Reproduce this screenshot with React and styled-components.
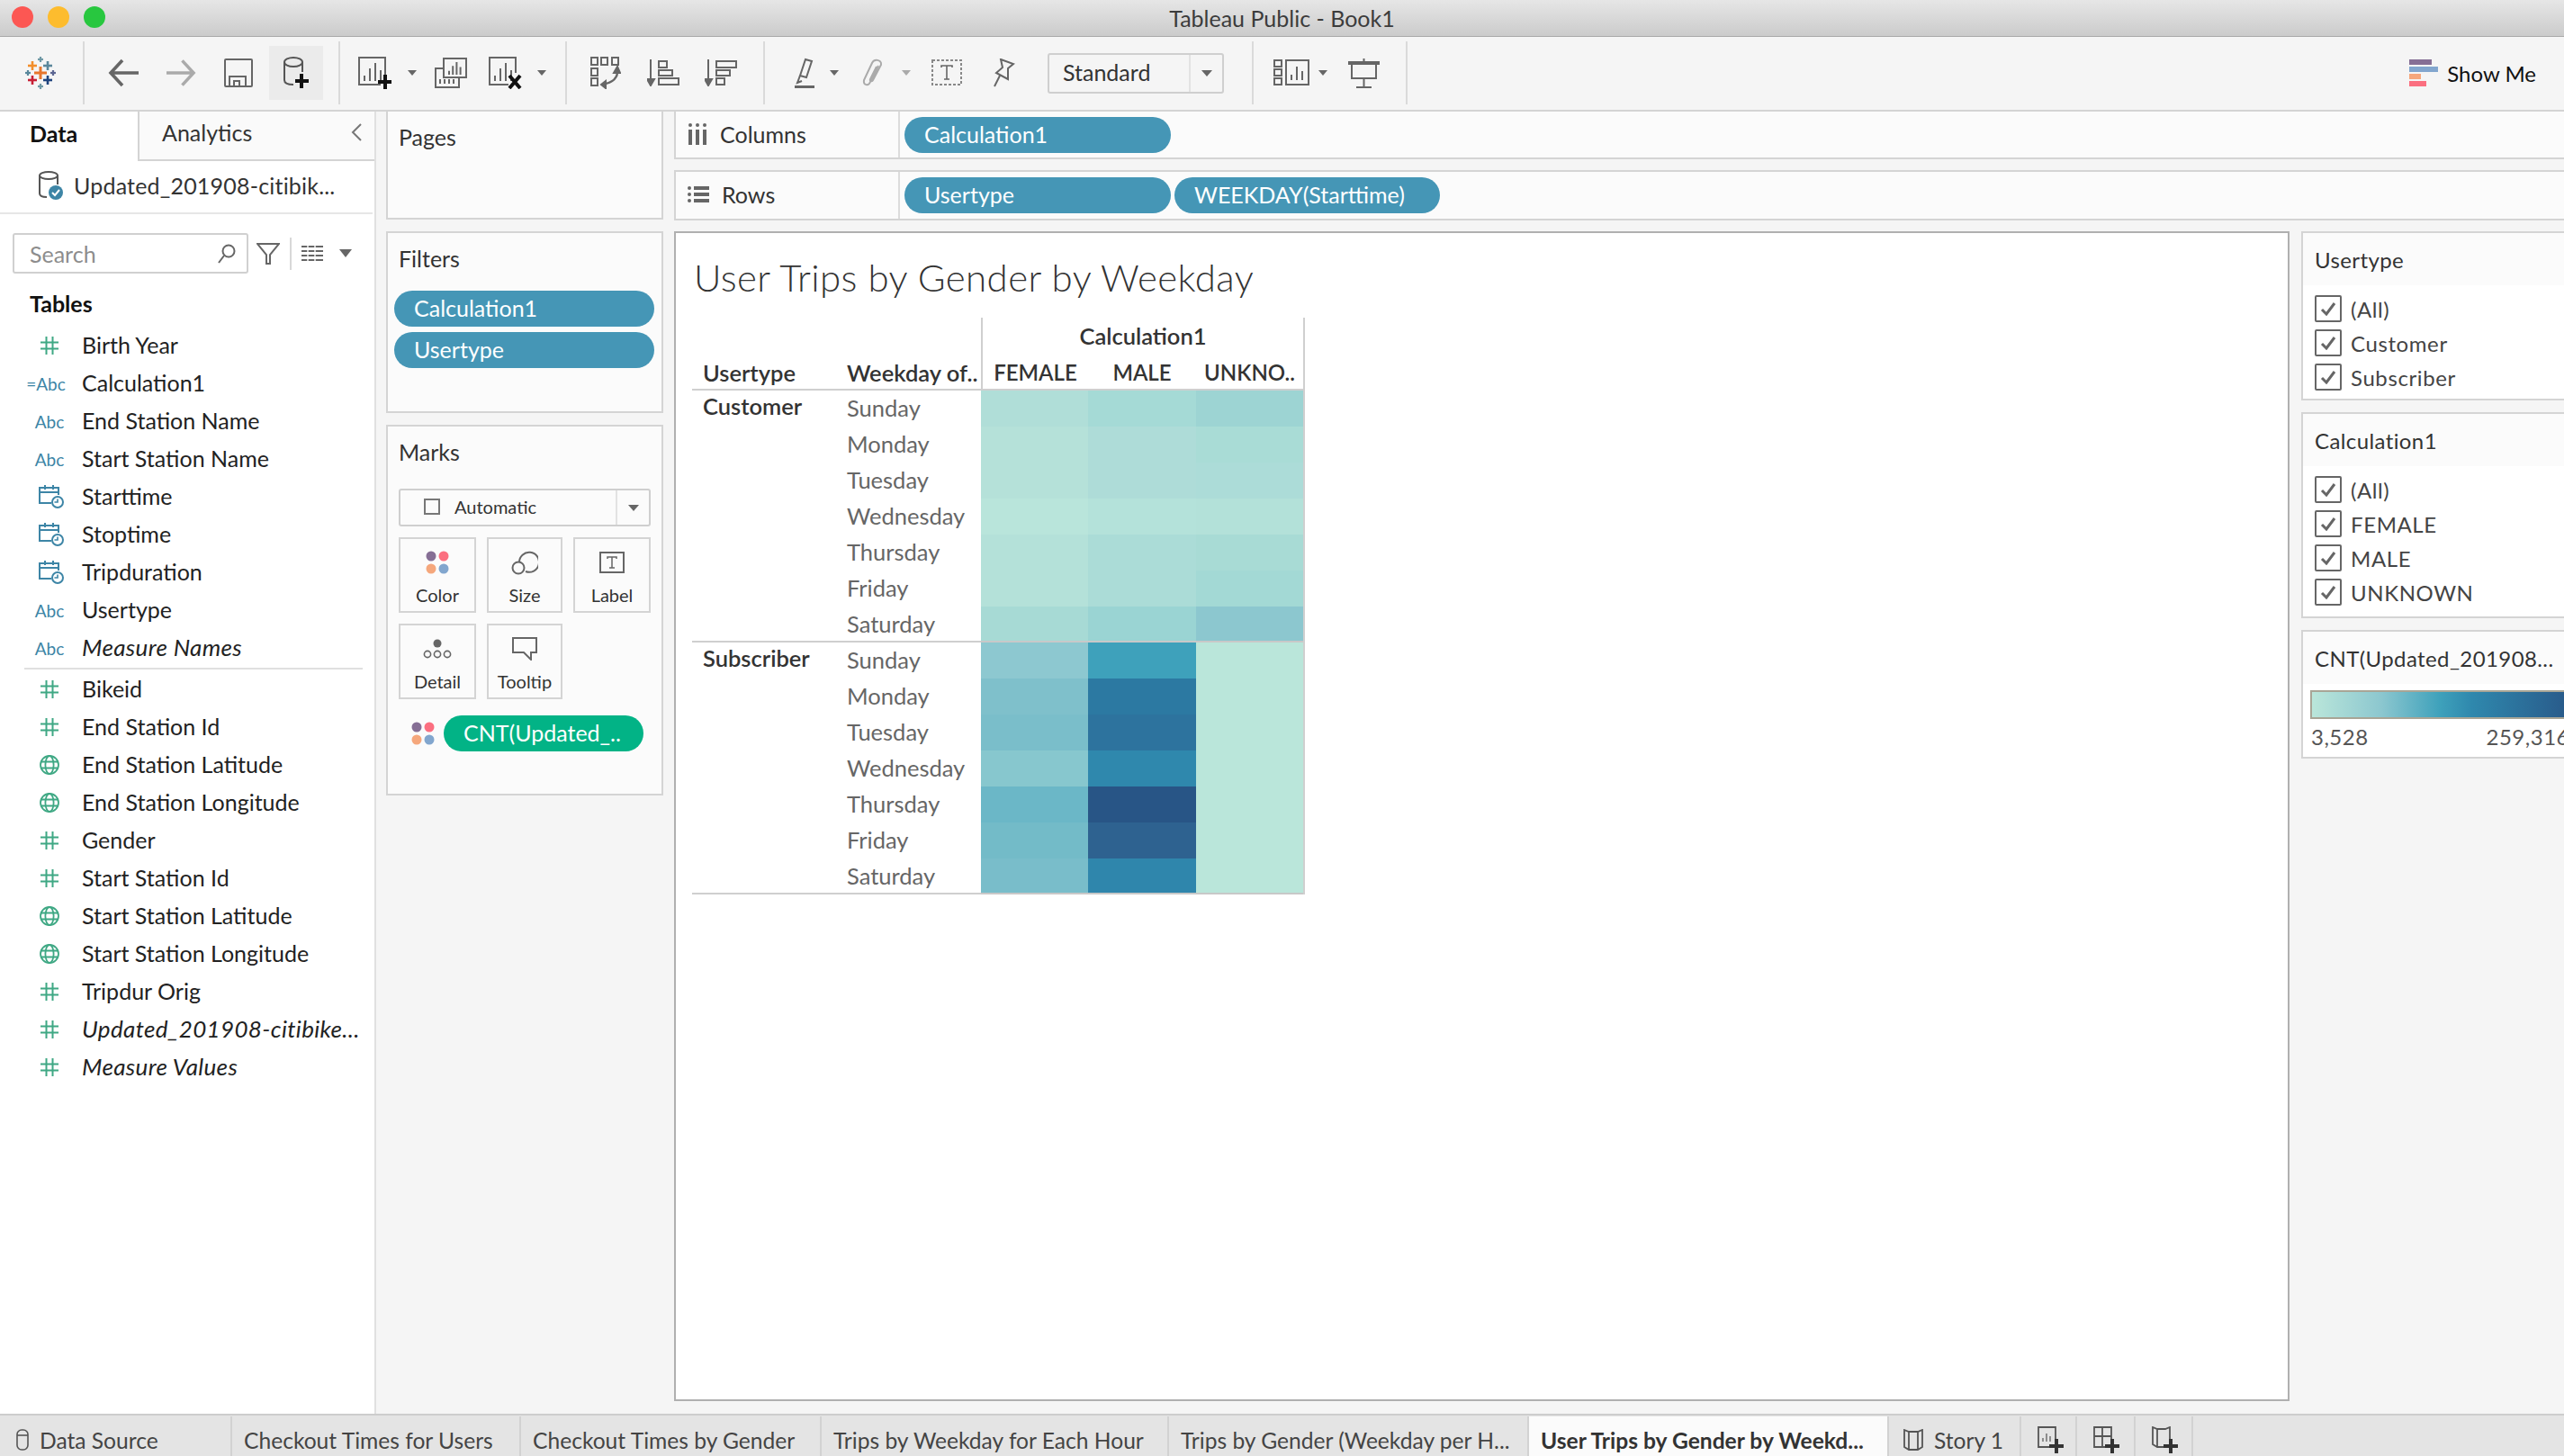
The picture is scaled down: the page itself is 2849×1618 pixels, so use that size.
import React from "react";
import styled, { createGlobalStyle } from "styled-components";

const GlobalStyle = createGlobalStyle`
  html, body {
    margin: 0;
    padding: 0;
    background: #f5f5f5;
  }
  body {
    font-family: "Lato", "Open Sans", sans-serif;
    color: #333;
  }
  * {
    box-sizing: border-box;
  }
`;

// Shell ==================
const Page = styled.div`
  width: 2849px;
  height: 1618px;
  display: flex;
  flex-direction: column;
  overflow: hidden;
`;

const TitleBar = styled.div`
  height: 41px;
  flex: none;
  display: flex;
  align-items: center;
  justify-content: center;
  position: relative;
  background: linear-gradient(#e6e6e6, #cbcbcb);
  border-bottom: 1px solid #a9a9a9;
  font-size: 25px;
  color: #3c3c3c;
`;

const Lights = styled.div`
  position: absolute;
  left: 13px;
  top: 7px;
  display: flex;
  gap: 16px;
`;

const Light = styled.span`
  width: 24px;
  height: 24px;
  border-radius: 50%;
  background: ${({ $c }) => $c};
`;

const Toolbar = styled.div`
  height: 81px;
  flex: none;
  display: flex;
  align-items: center;
  padding-bottom: 1px;
  background: #f5f5f5;
`;

const Tool = styled.span`
  display: flex;
  align-items: center;
  justify-content: center;
  flex: none;
  width: ${({ $w }) => $w}px;
  margin-left: ${({ $ml }) => $ml}px;
  height: ${({ $active }) => ($active ? "60px" : "auto")};
  background: ${({ $active }) => ($active ? "#ebebeb" : "transparent")};
`;

const ToolSep = styled.span`
  flex: none;
  width: 2px;
  height: 70px;
  background: #dadada;
  margin-left: ${({ $ml }) => $ml}px;
`;

const Caret = styled.span`
  flex: none;
  width: 0;
  height: 0;
  border-left: ${({ $w = 11 }) => $w / 2}px solid transparent;
  border-right: ${({ $w = 11 }) => $w / 2}px solid transparent;
  border-top: ${({ $w = 11 }) => $w * 0.6}px solid ${({ $c = "#666" }) => $c};
  margin-left: ${({ $ml = 0 }) => $ml}px;
`;

const DropBox = styled.div`
  flex: none;
  display: flex;
  align-items: center;
  width: ${({ $w }) => $w}px;
  height: ${({ $h }) => $h}px;
  margin-left: ${({ $ml = 0 }) => $ml}px;
  margin-top: ${({ $mt = 0 }) => $mt}px;
  border: 2px solid #cfcfcf;
  border-radius: 3px;
  font-size: ${({ $fs }) => $fs}px;
  color: #333;
`;

const DropLabel = styled.span`
  flex: 1;
  display: flex;
  align-items: center;
  padding: 0 0 2px ${({ $pl }) => $pl}px;
  gap: 16px;
`;

const DropArrow = styled.span`
  flex: none;
  width: ${({ $w }) => $w}px;
  height: 100%;
  border-left: 2px solid #e2e2e2;
  display: flex;
  align-items: center;
  justify-content: center;
`;

const ShowMe = styled.div`
  margin-left: auto;
  padding-right: 31px;
  display: flex;
  align-items: center;
  gap: 10px;
  font-size: 24px;
  color: #111;
`;

const Main = styled.div`
  height: 1449px;
  flex: none;
  display: flex;
  border-top: 2px solid #d4d4d4;
`;

// Data pane ==============
const DataPane = styled.div`
  width: 418px;
  flex: none;
  background: #fff;
  border-right: 2px solid #e0e0e0;
`;

const PaneTabs = styled.div`
  display: flex;
  height: 55px;
`;

const DataTab = styled.div`
  width: 153px;
  padding: 0 0 8px 33px;
  display: flex;
  align-items: center;
  font-size: 25px;
  font-weight: 700;
  color: #111;
`;

const AnalyticsTab = styled.div`
  flex: 1;
  display: flex;
  align-items: center;
  justify-content: space-between;
  padding: 0 14px 8px 25px;
  background: #fafafa;
  border-left: 2px solid #d4d4d4;
  border-bottom: 2px solid #d4d4d4;
  font-size: 25px;
  color: #333;
`;

const SourceRow = styled.div`
  height: 59px;
  display: flex;
  align-items: center;
  gap: 12px;
  padding: 0 0 3px 42px;
  border-bottom: 2px solid #e6e6e6;
  margin-right: 2px;
  font-size: 25px;
  letter-spacing: 0.2px;
  color: #333;
`;

const SearchRow = styled.div`
  display: flex;
  align-items: center;
  margin-top: 21px;
  padding-left: 14px;
`;

const SearchBox = styled.div`
  width: 262px;
  height: 45px;
  display: flex;
  align-items: center;
  justify-content: space-between;
  padding: 0 12px 0 17px;
  border: 2px solid #d0d0d0;
  border-radius: 3px;
  font-size: 25px;
  color: #8d8d8d;
`;

const FunnelSlot = styled.span`
  display: flex;
  margin-left: 9px;
`;

const VRule = styled.span`
  width: 2px;
  height: 36px;
  background: #d8d8d8;
  margin: 0 11px;
`;

const TablesHead = styled.div`
  margin: 18px 0 11px 33px;
  height: 30px;
  line-height: 30px;
  font-size: 25px;
  font-weight: 700;
  color: #111;
`;

const Field = styled.div`
  height: 42px;
  display: flex;
  align-items: center;
  font-size: ${({ $italic }) => ($italic ? 26 : 25)}px;
  letter-spacing: ${({ $italic }) => ($italic ? 0.35 : 0)}px;
  font-style: ${({ $italic }) => ($italic ? "italic" : "normal")};
  color: #222;
`;

const FieldIcon = styled.span`
  flex: none;
  width: 50px;
  margin: 0 11px 0 30px;
  display: flex;
  justify-content: center;
  font-size: 19px;
  font-style: normal;
  letter-spacing: 0;
  color: #3d85a6;
`;

const CalcMark = styled.span`
  margin-right: 8px;
`;

const FieldName = styled.span`
  white-space: nowrap;
  padding-bottom: 3px;
`;

const FieldRule = styled.div`
  height: 2px;
  margin: 1px 13px 1px 27px;
  background: #e0e0e0;
`;

// Cards ==================
const CardColumn = styled.div`
  width: 308px;
  flex: none;
  margin-left: 11px;
  display: flex;
  flex-direction: column;
  gap: 13px;
`;

const Card = styled.div`
  height: ${({ $h }) => $h}px;
  background: #fbfbfb;
  border: 2px solid #d4d4d4;
  border-top-width: ${({ $flush }) => ($flush ? 0 : 2)}px;
  padding: 13px 12px 0 12px;
`;

const CardTitle = styled.div`
  height: 30px;
  line-height: 30px;
  font-size: 25px;
  color: #333;
`;

const FilterPills = styled.div`
  margin: 21px 0 0 -5px;
  display: flex;
  flex-direction: column;
  gap: 6px;
`;

const Pill = styled.div`
  flex: none;
  height: 40px;
  width: ${({ $w }) => $w}px;
  border-radius: 20px;
  background: ${({ $c = "#4596b6" }) => $c};
  color: #fff;
  font-size: 25px;
  line-height: 38px;
  padding-left: ${({ $pl = 22 }) => $pl}px;
  white-space: nowrap;
`;

const MarkGrid = styled.div`
  display: grid;
  grid-template-columns: 86px 84px 86px;
  grid-auto-rows: 84px;
  column-gap: 12px;
  row-gap: 12px;
  margin-top: 12px;
`;

const MarkButton = styled.div`
  border: 2px solid #d4d4d4;
  display: flex;
  flex-direction: column;
  align-items: center;
  justify-content: space-between;
  padding: 7px 0 6px;
  font-size: 20px;
  color: #333;
`;

const MarkIcon = styled.span`
  height: 38px;
  display: flex;
  align-items: center;
  justify-content: center;
`;

const EncodingRow = styled.div`
  display: flex;
  align-items: center;
  gap: 10px;
  margin: 18px 0 0 14px;
`;

const MarkSquare = styled.span`
  width: 18px;
  height: 18px;
  border: 2px solid #777;
`;

// Shelves + view =========
const Workspace = styled.div`
  width: 2100px;
  flex: none;
  margin-left: 12px;
  display: flex;
  flex-direction: column;
`;

const Shelf = styled.div`
  height: ${({ $h }) => $h}px;
  margin-bottom: 12px;
  display: flex;
  background: #fbfbfb;
  border: 2px solid #d4d4d4;
  border-top-width: ${({ $flush }) => ($flush ? 0 : 2)}px;
  border-right: 0;
`;

const ShelfLabel = styled.div`
  width: 249px;
  flex: none;
  display: flex;
  align-items: center;
  gap: 14px;
  padding: 0 0 2px 13px;
  border-right: 2px solid #dcdcdc;
  font-size: 25px;
  color: #333;
`;

const ShelfPills = styled.div`
  display: flex;
  align-items: center;
  gap: 4px;
  padding-left: 5px;
`;

const Content = styled.div`
  flex: 1;
  display: flex;
  gap: 13px;
  padding-bottom: 14px;
`;

const View = styled.div`
  width: 1795px;
  flex: none;
  background: #fff;
  border: 2px solid #b0b0b0;
  padding: 26px 0 0 18px;
`;

const ViewTitle = styled.div`
  margin-left: 2px;
  height: 50px;
  line-height: 46px;
  font-size: 42px;
  letter-spacing: 0.4px;
  font-weight: 300;
  color: #333;
`;

const Crosstab = styled.div`
  margin-top: 18px;
  display: grid;
  width: 681px;
  grid-template-columns: 172px 149px 119px 120px 119px;
  grid-template-rows: 40px 41px;
  grid-auto-rows: 40px;
  border-right: 2px solid #cfcfcf;
`;

const TopHead = styled.div`
  grid-column: 3 / 6;
  display: flex;
  align-items: center;
  justify-content: center;
  font-size: 25.5px;
  font-weight: 600;
  color: #333;
  border-left: 2px solid #cfcfcf;
`;

const HeadCell = styled.div`
  display: flex;
  align-items: center;
  justify-content: ${({ $center }) => ($center ? "center" : "flex-start")};
  padding-left: ${({ $pl = 0 }) => $pl}px;
  font-size: ${({ $center }) => ($center ? 24 : 25.5)}px;
  font-weight: 600;
  color: #333;
  white-space: nowrap;
  box-shadow: inset 0 -2px 0 #cfcfcf;
  border-left: ${({ $rule }) => ($rule ? "2px solid #cfcfcf" : "0")};
`;

const TypeCell = styled.div`
  grid-row: span 7;
  padding: 0 0 0 12px;
  line-height: 34px;
  font-size: 25.5px;
  font-weight: 600;
  color: #333;
  box-shadow: inset 0 -2px 0 #cfcfcf;
`;

const DayCell = styled.div`
  display: flex;
  align-items: center;
  padding-bottom: 2px;
  font-size: 25.5px;
  color: #666;
  box-shadow: ${({ $end }) => ($end ? "inset 0 -2px 0 #cfcfcf" : "none")};
`;

const HeatCell = styled.div`
  background: ${({ $c }) => $c};
  box-shadow: ${({ $end }) => ($end ? "inset 0 -2px 0 #c8c8c8" : "none")};
`;

// Right filters ==========
const SideColumn = styled.div`
  width: 310px;
  flex: none;
  display: flex;
  flex-direction: column;
  gap: 13px;
`;

const SideCard = styled.div`
  border: 2px solid #d4d4d4;
  border-right: 0;
  background: #fff;
  padding-bottom: ${({ $pb = 8 }) => $pb}px;
`;

const SideHead = styled.div`
  height: 58px;
  display: flex;
  align-items: center;
  padding-left: 13px;
  background: #fbfbfb;
  font-size: 24px;
  letter-spacing: 0.4px;
  color: #333;
  white-space: nowrap;
`;

const CheckList = styled.div`
  padding-top: 7px;
`;

const CheckRow = styled.div`
  height: 38px;
  display: flex;
  align-items: center;
  gap: 10px;
  padding-left: 13px;
  font-size: 24px;
  letter-spacing: 0.6px;
  color: #444;
`;

const CheckBox = styled.span`
  flex: none;
  width: 30px;
  height: 30px;
  display: flex;
  align-items: center;
  justify-content: center;
  border: 2px solid #666;
  border-radius: 2px;
`;

const LegendBar = styled.div`
  height: 32px;
  margin: 7px 0 0 8px;
  border: 2px solid #a8a596;
  background: linear-gradient(90deg, #bae6da 0%, #8cc7cf 26%, #3ea1bb 48%, #2f88ad 60%, #285586 100%);
`;

const LegendLabels = styled.div`
  display: flex;
  justify-content: space-between;
  padding: 5px 0 0 9px;
  width: 296px;
  font-size: 24px;
  letter-spacing: 0.5px;
  color: #555;
`;

// Tabs ===================
const TabBar = styled.div`
  flex: 1;
  display: flex;
  background: #e4e4e4;
  border-top: 2px solid #cdcdcd;
`;

const Tab = styled.div`
  flex: none;
  width: ${({ $w }) => $w}px;
  margin-top: 1px;
  display: flex;
  align-items: center;
  gap: 12px;
  padding: 8px 0 0 ${({ $pl = 13 }) => $pl}px;
  background: ${({ $active }) => ($active ? "#fbfbfb" : "transparent")};
  border-right: 2px solid #d2d2d2;
  font-size: 24.6px;
  font-weight: ${({ $active }) => ($active ? 700 : 400)};
  color: ${({ $active }) => ($active ? "#333" : "#444")};
  white-space: nowrap;
`;

// Icons ==================
const Cross = ({ x, y, r, w = 2.6, c }) => (
  <g fill={c}>
    <rect x={x - r} y={y - w / 2} width={r * 2} height={w} />
    <rect x={x - w / 2} y={y - r} width={w} height={r * 2} />
  </g>
);

const TableauLogo = () => (
  <svg width="34" height="38" viewBox="0 0 34 38">
    <Cross x={17} y={19} r={7} w={3} c="#e8762c" />
    <Cross x={8} y={11} r={5} c="#f28e2b" />
    <Cross x={25} y={11} r={5} c="#5b879b" />
    <Cross x={8} y={27} r={5} c="#c72035" />
    <Cross x={25} y={27} r={5} c="#1f447e" />
    <Cross x={17} y={4} r={3} w={2.2} c="#7099a6" />
    <Cross x={3} y={19} r={3} w={2.2} c="#59879b" />
    <Cross x={31} y={19} r={3} w={2.2} c="#5c6692" />
    <Cross x={17} y={34} r={3} w={2.2} c="#7099a6" />
  </svg>
);

const ArrowIcon = ({ flip, c }) => (
  <svg width="34" height="32" viewBox="0 0 34 32" style={flip ? { transform: "scaleX(-1)" } : undefined}>
    <path d="M16 2 L3 16 L16 30 M3 16 H34" fill="none" stroke={c} strokeWidth="3.6" />
  </svg>
);

const SaveIcon = () => (
  <svg width="32" height="32" viewBox="0 0 32 32" fill="none" stroke="#666" strokeWidth="2">
    <rect x="1" y="1" width="30" height="30" rx="1" />
    <path d="M6 31 V20 H24 V31 M11 31 V25 H17 V31" />
  </svg>
);

const AddSourceIcon = () => (
  <svg width="30" height="36" viewBox="0 0 30 36" fill="none">
    <ellipse cx="12" cy="6" rx="10" ry="5" stroke="#555" strokeWidth="2" />
    <path d="M2 6 V26 C2 30 6 31 12 31 M22 6 V17" stroke="#555" strokeWidth="2" />
    <path d="M21 19 V35 M14 27 H29" stroke="#111" strokeWidth="4" />
  </svg>
);

const SheetBars = ({ x = 7, y = 11, s = 1, c = "#666" }) => (
  <path
    d={`M${x} ${y + 14 * s} v${6 * s} M${x + 6 * s} ${y + 6 * s} v${14 * s} M${x + 12 * s} ${y} v${20 * s} M${x + 18 * s} ${y + 8 * s} v${12 * s}`}
    stroke={c}
    strokeWidth="2"
    fill="none"
  />
);

const NewSheetIcon = () => (
  <svg width="37" height="36" viewBox="0 0 37 36" fill="none">
    <path d="M25 31 H1 V1 H30 V20" stroke="#666" strokeWidth="2" />
    <SheetBars x={7} y={7} />
    <path d="M30 20 V36 M22 28 H37" stroke="#111" strokeWidth="4" />
  </svg>
);

const DupSheetIcon = () => (
  <svg width="36" height="34" viewBox="0 0 36 34" fill="none" stroke="#666" strokeWidth="2">
    <rect x="10" y="1" width="25" height="21" fill="#f5f5f5" />
    <path d="M10 12 H1 V33 H27 V22" />
    <SheetBars x={16} y={5} s={0.7} />
    <path d="M6 24 v5 M11 24 v5 M16 24 v5 M21 24 v5" />
  </svg>
);

const ClearSheetIcon = () => (
  <svg width="37" height="36" viewBox="0 0 37 36" fill="none">
    <path d="M22 31 H1 V1 H30 V18" stroke="#666" strokeWidth="2" />
    <SheetBars x={7} y={7} />
    <path d="M23 21 L35 35 M35 21 L23 35" stroke="#111" strokeWidth="4" />
  </svg>
);

const SwapIcon = () => (
  <svg width="34" height="36" viewBox="0 0 34 36" fill="none" stroke="#666" strokeWidth="2">
    <rect x="1" y="1" width="7" height="8" />
    <rect x="12" y="1" width="7" height="8" />
    <rect x="24" y="1" width="7" height="8" />
    <rect x="1" y="13" width="7" height="8" />
    <rect x="1" y="24" width="7" height="8" />
    <path d="M30 14 C31 23 25 29 13 31" strokeWidth="2.4" />
    <path d="M26 18 L30 11 L33 18 Z M17 27 L12 31 L17 35 Z" fill="#666" />
  </svg>
);

const SortIcon = ({ desc }) => (
  <svg width="36" height="30" viewBox="0 0 36 30" fill="none" stroke="#666" strokeWidth="2">
    <path d="M4 0 V24" />
    <path d="M0 22 H8 L4 29 Z" fill="#666" />
    {desc ? (
      <>
        <rect x="13" y="2" width="22" height="7" />
        <rect x="13" y="12" width="15" height="6" />
        <rect x="13" y="21" width="9" height="7" />
      </>
    ) : (
      <>
        <rect x="13" y="2" width="9" height="7" />
        <rect x="13" y="12" width="15" height="6" />
        <rect x="13" y="21" width="22" height="7" />
      </>
    )}
  </svg>
);

const HighlightIcon = () => (
  <svg width="22" height="34" viewBox="0 0 22 34" fill="none" stroke="#666" strokeWidth="2">
    <path d="M12 2 L19 4 L13 22 L6 20 Z" />
    <path d="M6 20 L3 28 L8 26" />
    <rect x="0" y="31" width="22" height="3" fill="#666" stroke="none" />
  </svg>
);

const ClipIcon = () => (
  <svg width="25" height="32" viewBox="0 0 25 32" fill="none" stroke="#aaa" strokeWidth="2">
    <path d="M19 8 L10 26 C8 31 2 30 3 24 L12 5 C14 0 23 1 22 7 L13 24 C12 26 9 25 10 23 L17 9" />
  </svg>
);

const DashedTIcon = () => (
  <svg width="34" height="30" viewBox="0 0 34 30" fill="none">
    <rect x="1" y="1" width="32" height="27" stroke="#888" strokeWidth="2" strokeDasharray="3 2" />
    <path d="M11 9 V7 H23 V9 M17 7 V22 M14 22 H20" stroke="#666" strokeWidth="1.6" />
  </svg>
);

const PinIcon = () => (
  <svg width="25" height="32" viewBox="0 0 25 32" fill="none" stroke="#666" strokeWidth="2">
    <path d="M9 1 L23 6 L17 11 L17 23 L4 16 L11 10 Z" />
    <path d="M8 19 L2 31" />
  </svg>
);

const FitIcon = () => (
  <svg width="40" height="30" viewBox="0 0 40 30" fill="none" stroke="#666" strokeWidth="2">
    <rect x="1" y="1" width="8" height="7" />
    <rect x="1" y="11" width="8" height="7" />
    <rect x="1" y="21" width="8" height="7" />
    <rect x="14" y="1" width="25" height="27" />
    <path d="M20 17 V23 M26 8 V23 M32 13 V23" />
  </svg>
);

const PresentIcon = () => (
  <svg width="35" height="33" viewBox="0 0 35 33" fill="none" stroke="#666" strokeWidth="2">
    <path d="M0 5 H35" strokeWidth="4" />
    <path d="M4 6 V22 H31 V6 M17.5 0 V4 M17.5 22 V31 M9 32 H26" />
  </svg>
);

const ShowMeIcon = () => (
  <svg width="32" height="31" viewBox="0 0 32 31">
    <rect width="25" height="6" fill="#866f95" />
    <rect y="8" width="32" height="6" fill="#82a6ce" />
    <rect y="16" width="13" height="6" fill="#f5a77c" />
    <rect y="24" width="19" height="6" fill="#fb6f80" />
  </svg>
);

const ChevronLeft = () => (
  <svg width="12" height="20" viewBox="0 0 12 20" fill="none" stroke="#777" strokeWidth="2">
    <path d="M11 1 L2 10 L11 19" />
  </svg>
);

const SourceIcon = () => (
  <svg width="28" height="32" viewBox="0 0 28 32" fill="none">
    <ellipse cx="12" cy="5" rx="10" ry="4" stroke="#555" strokeWidth="2" />
    <path d="M2 5 V25 C2 28 5 29 10 29 M22 5 V15" stroke="#555" strokeWidth="2" />
    <circle cx="20" cy="24" r="8" fill="#3d85a6" />
    <path d="M16 24 L19 27 L24 21" stroke="#fff" strokeWidth="2" />
  </svg>
);

const Magnifier = () => (
  <svg width="20" height="22" viewBox="0 0 20 22" fill="none" stroke="#666" strokeWidth="2">
    <circle cx="12" cy="8" r="6.5" />
    <path d="M7 13 L1 21" />
  </svg>
);

const FunnelIcon = () => (
  <svg width="26" height="24" viewBox="0 0 26 24" fill="none" stroke="#666" strokeWidth="2">
    <path d="M1 1 H25 L15 13 V23 H11 V13 Z" />
  </svg>
);

const ListGridIcon = () => (
  <svg width="24" height="20" viewBox="0 0 24 20" stroke="#666" strokeWidth="2" fill="none">
    <path d="M0 2 H24 M0 7 H24 M0 12 H24 M0 17 H24" />
    <path d="M7 0 V20 M15 0 V20" stroke="#fff" strokeWidth="1.4" />
  </svg>
);

const HashIcon = () => (
  <svg width="20" height="20" viewBox="0 0 20 20" stroke="#3fa884" strokeWidth="2" fill="none">
    <path d="M6.5 0 V20 M13.5 0 V20 M0 6.5 H20 M0 13.5 H20" />
  </svg>
);

const GlobeIcon = () => (
  <svg width="22" height="22" viewBox="0 0 22 22" stroke="#3fa884" strokeWidth="1.8" fill="none">
    <circle cx="11" cy="11" r="10" />
    <ellipse cx="11" cy="11" rx="4.6" ry="10" />
    <path d="M1 7.5 H21 M1 14.5 H21" />
  </svg>
);

const CalendarIcon = () => (
  <svg width="28" height="26" viewBox="0 0 28 26" stroke="#3d85a6" strokeWidth="2" fill="none" style={{ marginLeft: 4 }}>
    <path d="M14 20 H1 V3 H22 V11 M1 8 H22 M7 0 V5 M16 0 V5" />
    <circle cx="21" cy="19" r="6" fill="#fff" />
    <path d="M21 15.5 V19 H17.5" strokeWidth="1.6" />
  </svg>
);

const ColorDots = () => (
  <svg width="26" height="26" viewBox="0 0 26 26">
    <circle cx="6" cy="6" r="5.5" fill="#866f95" />
    <circle cx="20" cy="6" r="5.5" fill="#fb6f80" />
    <circle cx="6" cy="20" r="5.5" fill="#f5a77c" />
    <circle cx="20" cy="20" r="5.5" fill="#82a6ce" />
  </svg>
);

const SizeIcon = () => (
  <svg width="30" height="28" viewBox="0 0 30 28" fill="none" stroke="#666" strokeWidth="2">
    <path d="M9 14 A11 11 0 1 1 16 24" />
    <circle cx="8" cy="20" r="6.5" />
  </svg>
);

const LabelIcon = () => (
  <svg width="28" height="24" viewBox="0 0 28 24" fill="none" stroke="#666" strokeWidth="2">
    <rect x="1" y="1" width="26" height="22" />
    <path d="M9 8 V6 H19 V8 M14 6 V18 M11 18 H17" strokeWidth="1.5" />
  </svg>
);

const DetailIcon = () => (
  <svg width="32" height="22" viewBox="0 0 32 22" fill="none" stroke="#666" strokeWidth="1.6">
    <circle cx="16" cy="5" r="4.5" fill="#666" stroke="none" />
    <circle cx="5" cy="17" r="3.6" />
    <circle cx="16" cy="17" r="3.6" />
    <circle cx="27" cy="17" r="3.6" />
  </svg>
);

const TooltipIcon = () => (
  <svg width="28" height="26" viewBox="0 0 28 26" fill="none" stroke="#666" strokeWidth="2">
    <path d="M2 1 H27 V17 H21 V25 L13 17 H1 V1 Z" />
  </svg>
);

const ColumnsIcon = () => (
  <svg width="22" height="24" viewBox="0 0 22 24" fill="#666">
    <circle cx="3" cy="2" r="2" />
    <circle cx="11" cy="2" r="2" />
    <circle cx="19" cy="2" r="2" />
    <rect x="1" y="7" width="4" height="17" />
    <rect x="9" y="7" width="4" height="17" />
    <rect x="17" y="7" width="4" height="17" />
  </svg>
);

const RowsIcon = () => (
  <svg width="24" height="20" viewBox="0 0 24 20" fill="#666">
    <circle cx="2" cy="3" r="2" />
    <circle cx="2" cy="10" r="2" />
    <circle cx="2" cy="17" r="2" />
    <rect x="7" y="1" width="17" height="4" />
    <rect x="7" y="8" width="17" height="4" />
    <rect x="7" y="15" width="17" height="4" />
  </svg>
);

const CheckMark = () => (
  <svg width="18" height="16" viewBox="0 0 18 16" fill="none" stroke="#666" strokeWidth="3">
    <path d="M2 9 L7 14 L16 2" />
  </svg>
);

const TabSourceIcon = () => (
  <svg width="14" height="24" viewBox="0 0 14 24" fill="none" stroke="#555" strokeWidth="1.6">
    <rect x="1" y="1" width="12" height="22" rx="5" />
    <path d="M1 7 H13" />
  </svg>
);

const StoryIcon = () => (
  <svg width="22" height="24" viewBox="0 0 22 24" fill="none" stroke="#555" strokeWidth="1.8">
    <path d="M1 1 L6 3 H16 L21 1 V20 L16 23 H6 L1 20 Z M6 3 V23 M16 3 V23" />
  </svg>
);

const NewTabIcon = ({ kind }) => (
  <svg width="30" height="30" viewBox="0 0 30 30" fill="none" stroke="#555" strokeWidth="1.8">
    {kind === "sheet" && (
      <>
        <path d="M16 23 H1 V1 H20 V14" />
        <path d="M6 17 v-4 M10 17 v-9 M14 17 v-6" strokeWidth="1.2" />
      </>
    )}
    {kind === "dash" && <path d="M16 23 H1 V1 H20 V14 M1 11 H20 M10 1 V23" />}
    {kind === "story" && <path d="M16 23 H6 L1 20 V1 L6 3 H15 L20 1 V14 M6 3 V23" />}
    <path d="M21 14 V30 M13 22 H29" stroke="#333" strokeWidth="4" />
  </svg>
);

// Data ===================
const dimensions = [
  { icon: "hash", name: "Birth Year" },
  { icon: "calc", name: "Calculation1" },
  { icon: "abc", name: "End Station Name" },
  { icon: "abc", name: "Start Station Name" },
  { icon: "date", name: "Starttime" },
  { icon: "date", name: "Stoptime" },
  { icon: "date", name: "Tripduration" },
  { icon: "abc", name: "Usertype" },
  { icon: "abc", name: "Measure Names", italic: true },
];

const others = [
  { icon: "hash", name: "Bikeid" },
  { icon: "hash", name: "End Station Id" },
  { icon: "globe", name: "End Station Latitude" },
  { icon: "globe", name: "End Station Longitude" },
  { icon: "hash", name: "Gender" },
  { icon: "hash", name: "Start Station Id" },
  { icon: "globe", name: "Start Station Latitude" },
  { icon: "globe", name: "Start Station Longitude" },
  { icon: "hash", name: "Tripdur Orig" },
  { icon: "hash", name: "Updated_201908-citibike...", italic: true },
  { icon: "hash", name: "Measure Values", italic: true },
];

const days = ["Sunday", "Monday", "Tuesday", "Wednesday", "Thursday", "Friday", "Saturday"];

const heat = {
  Customer: [
    ["#b0ded8", "#a5dad6", "#9dd4d3"],
    ["#b5e1d9", "#aedcd8", "#a9dcd6"],
    ["#b5e1d9", "#aedcd8", "#acdcd8"],
    ["#b9e5db", "#b4e2da", "#b3e1d9"],
    ["#b4e1d9", "#abdcd7", "#a8dbd5"],
    ["#b4e1d9", "#abdcd7", "#a3d9d5"],
    ["#a7dad5", "#9ad4d3", "#8cc7cf"],
  ],
  Subscriber: [
    ["#8dc8d0", "#3ea1bb", "#bae6da"],
    ["#7fc0cb", "#2c79a2", "#bae6da"],
    ["#7abeca", "#2d739e", "#bae6da"],
    ["#87c7ce", "#2f88ad", "#bae6da"],
    ["#6bb7c7", "#285586", "#bae6da"],
    ["#73bbc8", "#2e6290", "#bae6da"],
    ["#79bdca", "#2f86ac", "#bae6da"],
  ],
};

const fieldIcon = (icon) => {
  if (icon === "hash") return <HashIcon />;
  if (icon === "globe") return <GlobeIcon />;
  if (icon === "date") return <CalendarIcon />;
  if (icon === "calc") return <CalcMark>=Abc</CalcMark>;
  return "Abc";
};

const FieldRow = ({ icon, name, italic }) => (
  <Field $italic={italic}>
    <FieldIcon>{fieldIcon(icon)}</FieldIcon>
    <FieldName>{name}</FieldName>
  </Field>
);

const FilterCard = ({ title, items, pb }) => (
  <SideCard $pb={pb}>
    <SideHead>{title}</SideHead>
    <CheckList>
      {items.map((item) => (
        <CheckRow key={item}>
          <CheckBox>
            <CheckMark />
          </CheckBox>
          {item}
        </CheckRow>
      ))}
    </CheckList>
  </SideCard>
);

export default function App() {
  return (
    <Page>
      <GlobalStyle />
      <TitleBar>
        <Lights>
          <Light $c="#fc5753" />
          <Light $c="#fdbc2e" />
          <Light $c="#28c73f" />
        </Lights>
        Tableau Public - Book1
      </TitleBar>

      <Toolbar>
        <Tool $ml={28} $w={34}><TableauLogo /></Tool>
        <ToolSep $ml={30} />
        <Tool $ml={26} $w={34}><ArrowIcon c="#666" /></Tool>
        <Tool $ml={31} $w={33}><ArrowIcon flip c="#aaa" /></Tool>
        <Tool $ml={31} $w={32}><SaveIcon /></Tool>
        <Tool $ml={18} $w={60} $active><AddSourceIcon /></Tool>
        <ToolSep $ml={17} />
        <Tool $ml={20} $w={37}><NewSheetIcon /></Tool>
        <Caret $ml={18} $w={10} />
        <Tool $ml={20} $w={36}><DupSheetIcon /></Tool>
        <Tool $ml={24} $w={37}><ClearSheetIcon /></Tool>
        <Caret $ml={17} $w={10} />
        <ToolSep $ml={21} />
        <Tool $ml={26} $w={34}><SwapIcon /></Tool>
        <Tool $ml={29} $w={36}><SortIcon /></Tool>
        <Tool $ml={28} $w={36}><SortIcon desc /></Tool>
        <ToolSep $ml={29} />
        <Tool $ml={33} $w={22}><HighlightIcon /></Tool>
        <Caret $ml={17} $w={11} />
        <Tool $ml={25} $w={25}><ClipIcon /></Tool>
        <Caret $ml={20} $w={10} $c="#aaa" />
        <Tool $ml={23} $w={34}><DashedTIcon /></Tool>
        <Tool $ml={34} $w={25}><PinIcon /></Tool>
        <DropBox $ml={36} $w={196} $h={45} $fs={25}>
          <DropLabel $pl={15}>Standard</DropLabel>
          <DropArrow $w={37}><Caret $w={12} /></DropArrow>
        </DropBox>
        <ToolSep $ml={31} />
        <Tool $ml={22} $w={40}><FitIcon /></Tool>
        <Caret $ml={10} $w={11} />
        <Tool $ml={23} $w={35}><PresentIcon /></Tool>
        <ToolSep $ml={29} />
        <ShowMe>
          <ShowMeIcon />
          Show Me
        </ShowMe>
      </Toolbar>

      <Main>
        <DataPane>
          <PaneTabs>
            <DataTab>Data</DataTab>
            <AnalyticsTab>
              Analytics
              <ChevronLeft />
            </AnalyticsTab>
          </PaneTabs>
          <SourceRow>
            <SourceIcon />
            Updated_201908-citibik...
          </SourceRow>
          <SearchRow>
            <SearchBox>
              Search
              <Magnifier />
            </SearchBox>
            <FunnelSlot><FunnelIcon /></FunnelSlot>
            <VRule />
            <ListGridIcon />
            <Caret $ml={18} $w={15} />
          </SearchRow>
          <TablesHead>Tables</TablesHead>
          {dimensions.map((f) => (
            <FieldRow key={f.name} {...f} />
          ))}
          <FieldRule />
          {others.map((f) => (
            <FieldRow key={f.name} {...f} />
          ))}
        </DataPane>

        <CardColumn>
          <Card $h={120} $flush>
            <CardTitle>Pages</CardTitle>
          </Card>
          <Card $h={202}>
            <CardTitle>Filters</CardTitle>
            <FilterPills>
              <Pill $w={289}>Calculation1</Pill>
              <Pill $w={289}>Usertype</Pill>
            </FilterPills>
          </Card>
          <Card $h={412}>
            <CardTitle>Marks</CardTitle>
            <DropBox $w={280} $h={42} $fs={20} $mt={26}>
              <DropLabel $pl={26}>
                <MarkSquare />
                Automatic
              </DropLabel>
              <DropArrow $w={37}><Caret $w={13} /></DropArrow>
            </DropBox>
            <MarkGrid>
              <MarkButton><MarkIcon><ColorDots /></MarkIcon>Color</MarkButton>
              <MarkButton><MarkIcon><SizeIcon /></MarkIcon>Size</MarkButton>
              <MarkButton><MarkIcon><LabelIcon /></MarkIcon>Label</MarkButton>
              <MarkButton><MarkIcon><DetailIcon /></MarkIcon>Detail</MarkButton>
              <MarkButton><MarkIcon><TooltipIcon /></MarkIcon>Tooltip</MarkButton>
            </MarkGrid>
            <EncodingRow>
              <ColorDots />
              <Pill $w={222} $c="#02b386">CNT(Updated_..</Pill>
            </EncodingRow>
          </Card>
        </CardColumn>

        <Workspace>
          <Shelf $h={53} $flush>
            <ShelfLabel><ColumnsIcon />Columns</ShelfLabel>
            <ShelfPills>
              <Pill $w={296}>Calculation1</Pill>
            </ShelfPills>
          </Shelf>
          <Shelf $h={56}>
            <ShelfLabel><RowsIcon />Rows</ShelfLabel>
            <ShelfPills>
              <Pill $w={296}>Usertype</Pill>
              <Pill $w={295}>WEEKDAY(Starttime)</Pill>
            </ShelfPills>
          </Shelf>
          <Content>
            <View>
              <ViewTitle>User Trips by Gender by Weekday</ViewTitle>
              <Crosstab>
                <span />
                <span />
                <TopHead>Calculation1</TopHead>
                <HeadCell $pl={12}>Usertype</HeadCell>
                <HeadCell>Weekday of..</HeadCell>
                <HeadCell $center $rule>FEMALE</HeadCell>
                <HeadCell $center>MALE</HeadCell>
                <HeadCell $center>UNKNO..</HeadCell>
                {Object.entries(heat).map(([type, rows]) =>
                  rows.map((row, i) => (
                    <React.Fragment key={type + days[i]}>
                      {i === 0 && <TypeCell>{type}</TypeCell>}
                      <DayCell $end={i === 6}>{days[i]}</DayCell>
                      {row.map((c, j) => (
                        <HeatCell key={j} $c={c} $end={i === 6} />
                      ))}
                    </React.Fragment>
                  ))
                )}
              </Crosstab>
            </View>
            <SideColumn>
              <FilterCard title="Usertype" pb={5} items={["(All)", "Customer", "Subscriber"]} />
              <FilterCard title="Calculation1" items={["(All)", "FEMALE", "MALE", "UNKNOWN"]} />
              <SideCard>
                <SideHead>CNT(Updated_201908...</SideHead>
                <LegendBar />
                <LegendLabels>
                  <span>3,528</span>
                  <span>259,316</span>
                </LegendLabels>
              </SideCard>
            </SideColumn>
          </Content>
        </Workspace>
      </Main>

      <TabBar>
        <Tab $w={258} $pl={18}><TabSourceIcon />Data Source</Tab>
        <Tab $w={321}>Checkout Times for Users</Tab>
        <Tab $w={334}>Checkout Times by Gender</Tab>
        <Tab $w={386}>Trips by Weekday for Each Hour</Tab>
        <Tab $w={400}>Trips by Gender (Weekday per H...</Tab>
        <Tab $w={400} $active>User Trips by Gender by Weekd...</Tab>
        <Tab $w={147} $pl={16}><StoryIcon />Story 1</Tab>
        <Tab $w={62} $pl={18}><NewTabIcon kind="sheet" /></Tab>
        <Tab $w={65} $pl={18}><NewTabIcon kind="dash" /></Tab>
        <Tab $w={64} $pl={18}><NewTabIcon kind="story" /></Tab>
      </TabBar>
    </Page>
  );
}
